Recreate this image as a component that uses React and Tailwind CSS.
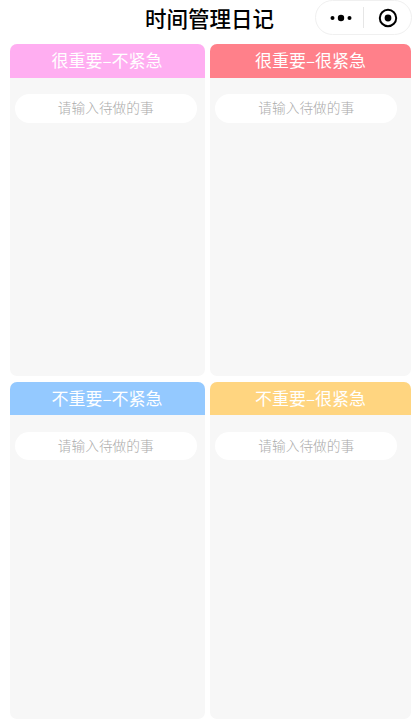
const quadrants = [
  { title: '很重要–不紧急', headerClass: 'bg-[#ffaef1]', height: 'h-[332px]' },
  { title: '很重要–很紧急', headerClass: 'bg-[#ff808a]', height: 'h-[332px]' },
  { title: '不重要–不紧急', headerClass: 'bg-[#94c9ff]', height: 'h-[337px]' },
  { title: '不重要–很紧急', headerClass: 'bg-[#ffd580]', height: 'h-[337px]' },
]

function Quadrant({ title, headerClass, height }) {
  return (
    <section className={`${height} overflow-hidden rounded-[7px] bg-[#f7f7f7]`}>
      <h2 className={`h-[33.5px] text-center text-[17px] leading-[32px] font-normal text-white ${headerClass}`}>
        {title}
      </h2>
      <div className="ml-[5.25px] mt-[16.75px] flex h-[28.5px] w-[182px] items-center justify-center rounded-full bg-white pb-[2px] text-[13.7px] font-light text-[#ababab]">
        请输入待做的事
      </div>
    </section>
  )
}

function MenuCapsule() {
  return (
    <div className="absolute right-[8px] top-0 flex h-[35px] w-[97px] items-center rounded-full border border-[#f0f0f0] bg-white">
      <div className="flex flex-1 justify-center pl-[2px]">
        <svg width="24" height="8" viewBox="0 0 24 8" fill="#000">
          <circle cx="3.5" cy="4" r="2" />
          <circle cx="12" cy="4" r="3.2" />
          <circle cx="20.5" cy="4" r="2" />
        </svg>
      </div>
      <div className="h-[21px] w-px bg-[#e6e6e6]" />
      <div className="flex w-[47px] justify-center">
        <svg width="20" height="20" viewBox="0 0 20 20">
          <circle cx="10" cy="10" r="8.2" fill="none" stroke="#000" strokeWidth="2" />
          <circle cx="10" cy="10" r="3.4" fill="#000" />
        </svg>
      </div>
    </div>
  )
}

export default function App() {
  return (
    <main className="relative h-[720px] w-[420px] overflow-hidden bg-white font-['Noto_Sans_CJK_SC',sans-serif]">
      <header className="relative h-[44px]">
        <h1 className="w-[419px] pt-[3px] text-center text-[21.5px] leading-[30px] font-medium text-black">
          时间管理日记
        </h1>
        <MenuCapsule />
      </header>
      <div className="ml-[9.5px] grid grid-cols-[195px_201px] gap-x-[5.5px] gap-y-[5.7px]">
        {quadrants.map((item) => (
          <Quadrant key={item.title} {...item} />
        ))}
      </div>
    </main>
  )
}
